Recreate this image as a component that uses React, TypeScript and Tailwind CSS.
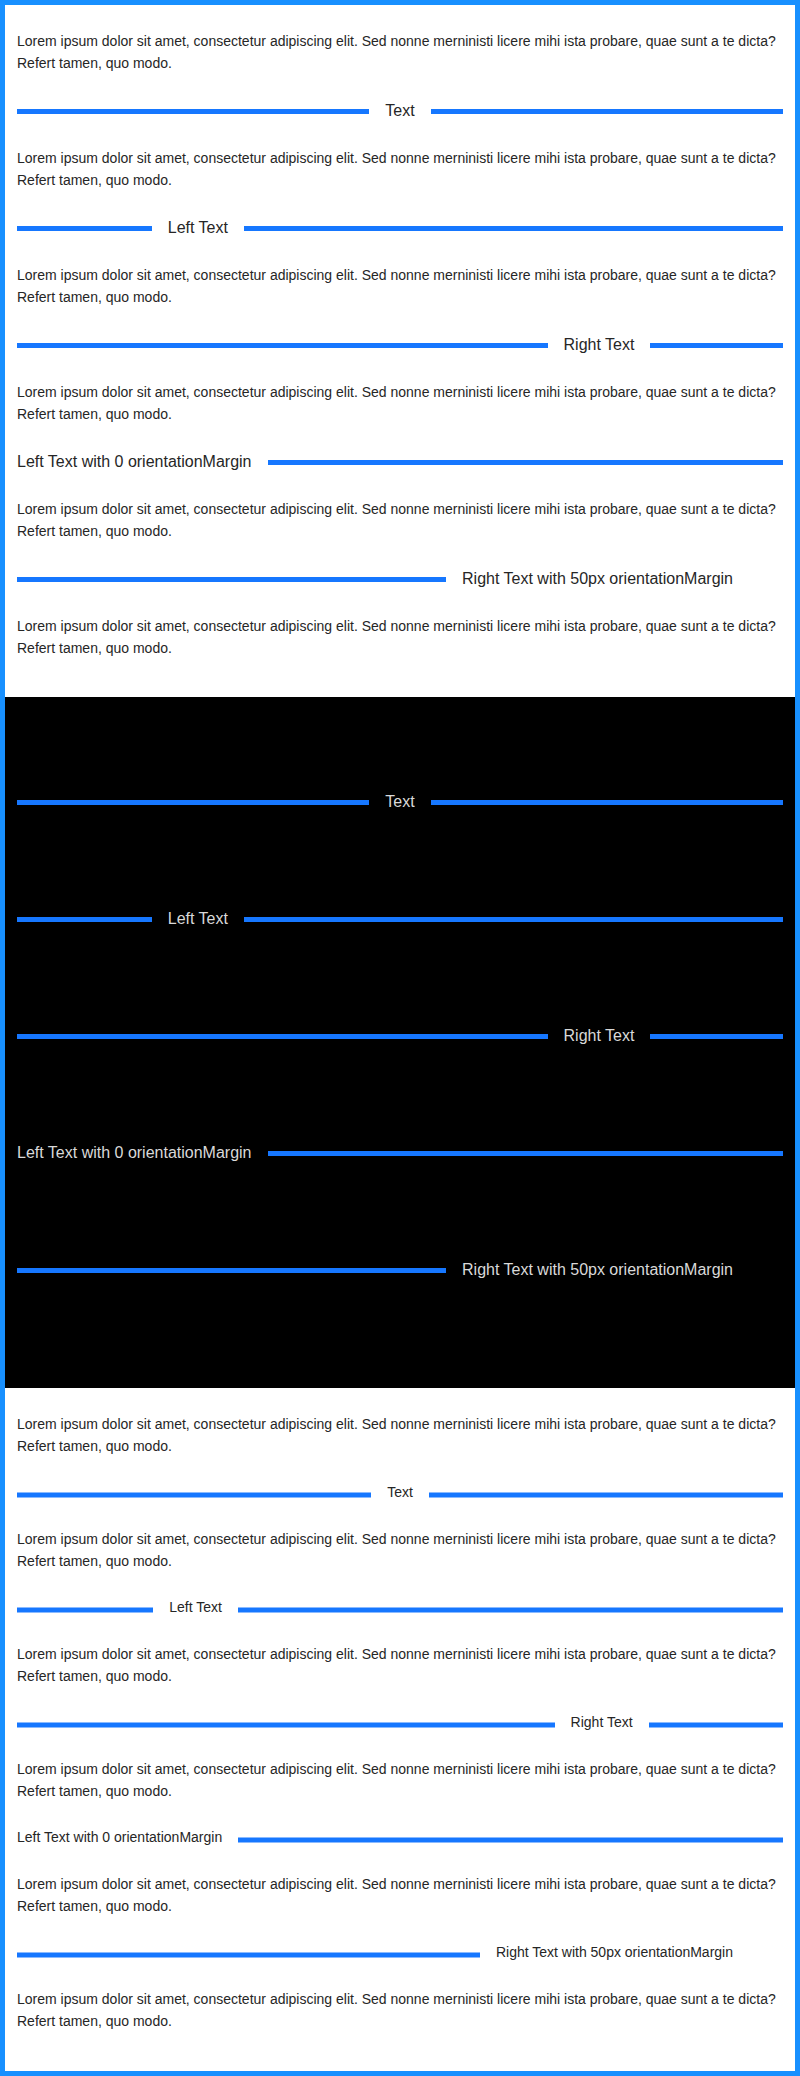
import React from 'react';

const LOREM =
  'Lorem ipsum dolor sit amet, consectetur adipiscing elit. Sed nonne merninisti licere mihi ista probare, quae sunt a te dicta? Refert tamen, quo modo.';

type Kind = 'center' | 'left' | 'right' | 'left0' | 'right50';

const Divider = ({ kind, label, small, dark }: { kind: Kind; label: string; small?: boolean; dark?: boolean }) => {
  const size = small ? 'text-sm leading-[23px]' : 'text-base leading-[25px]';
  const color = dark ? 'text-[#d9d9d9]' : 'text-[#262626]';
  const shift = small ? 'translate-y-[2.5px]' : 'translate-y-px';
  const pad =
    kind === 'left0' ? 'pl-0 pr-4' : kind === 'right50' ? 'pl-4 pr-0 mr-[50px]' : 'px-4';

  const Line = ({ basis }: { basis: string }) => <div className={`h-[5px] bg-[#1677ff] ${shift} ${basis}`} />;

  return (
    <div className={`my-6 flex items-center whitespace-nowrap ${size} ${color}`}>
      {kind === 'center' && <Line basis="basis-1/2" />}
      {kind === 'left' && <Line basis="basis-[20%]" />}
      {kind === 'right' && <Line basis="basis-[80%]" />}
      {kind === 'right50' && <Line basis="flex-1" />}
      <span className={`shrink-0 ${pad}`}>{label}</span>
      {kind === 'center' && <Line basis="basis-1/2" />}
      {kind === 'left' && <Line basis="basis-[80%]" />}
      {kind === 'right' && <Line basis="basis-[20%]" />}
      {kind === 'left0' && <Line basis="flex-1" />}
    </div>
  );
};

const dividers: { kind: Kind; label: string }[] = [
  { kind: 'center', label: 'Text' },
  { kind: 'left', label: 'Left Text' },
  { kind: 'right', label: 'Right Text' },
  { kind: 'left0', label: 'Left Text with 0 orientationMargin' },
  { kind: 'right50', label: 'Right Text with 50px orientationMargin' },
];

// paragraphs keep the same dark ink in the dark block, so they vanish there
const Para = ({ dark }: { dark?: boolean }) => (
  <p className={`text-sm leading-[22px] ${dark ? 'text-black' : 'text-[#262626]'}`}>{LOREM}</p>
);

const Section = ({ dark, small, className }: { dark?: boolean; small?: boolean; className: string }) => (
  <div className={className}>
    <Para dark={dark} />
    {dividers.map((d) => (
      <React.Fragment key={d.label}>
        <Divider kind={d.kind} label={d.label} small={small} dark={dark} />
        <Para dark={dark} />
      </React.Fragment>
    ))}
  </div>
);

export default function App() {
  return (
    <div className="min-h-screen w-full border-[5px] border-[#1890ff] bg-white font-['Liberation_Sans',Arial,sans-serif]">
      <Section className="px-3 pt-[25px] pb-[38px]" />
      <Section dark className="bg-black px-3 pt-[24px] pb-[38px]" />
      <Section small className="px-3 pt-[25px] pb-[39px]" />
    </div>
  );
}
